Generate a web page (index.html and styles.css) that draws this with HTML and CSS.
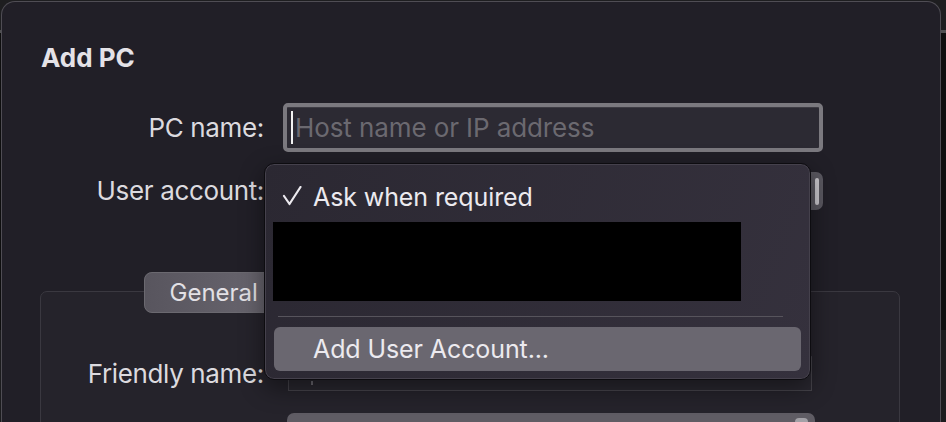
FILE: index.html
```html
<!DOCTYPE html>
<html lang="en">
<head>
    <meta charset="UTF-8">
    <meta name="viewport" content="width=device-width, initial-scale=1.0">
    <title>Add PC</title>
    <link rel="stylesheet" href="styles.css">
</head>
<body>
    <div class="sheet">
        <h1 class="title">Add PC</h1>

        <div class="form">
            <label class="label" for="pc_name">PC name:</label>
            <div class="field field-focus">
                <span class="caret"></span>
                <span class="placeholder">Host name or IP address</span>
            </div>

            <label class="label">User account:</label>
            <div class="select"><span class="knob"></span></div>
        </div>

        <div class="tabs">
            <div class="tab-bar">
                <div class="segments">
                    <span class="segment active">General</span>
                    <span class="segment"></span>
                </div>
            </div>
            <div class="tab-box">
                <div class="form form-inner">
                    <label class="label">Friendly name:</label>
                    <div class="field field-plain"><span class="tick"></span></div>

                    <span class="label"></span>
                    <div class="select select-low"><span class="knob"></span></div>
                </div>
            </div>
        </div>

        <!-- user account popup menu, open over the form -->
        <div class="menu">
            <div class="menu-item">
                <svg class="check" width="20" height="20" viewBox="0 0 20 20">
                    <path d="M2 10 L7.5 18 L18.5 1" fill="none" stroke="#eceaef" stroke-width="2.2" stroke-linecap="round" stroke-linejoin="round"/>
                </svg>
                <span>Ask when required</span>
            </div>
            <div class="redacted"></div>
            <div class="menu-sep"></div>
            <div class="menu-item highlighted">
                <span>Add User Account...</span>
            </div>
        </div>
    </div>
</body>
</html>
```

FILE: styles.css
```css
html, body {
    margin: 0;
    height: 100%;
    overflow: hidden;
}
body {
    font-family: Inter, "Noto Sans", sans-serif;
    color: #dcdadf;
    background: linear-gradient(to bottom, #1e1e20 0, #1e1e20 30px, #505052 30px, #505052 33px, #0e0e0e 33px, #0e0e0e 330px, #1c1c1e 330px);
}
.sheet {
    position: relative;
    margin: 1px 5px 0 1px;
    height: 421px;
    overflow: hidden;
    padding: 40px 40px 0 39px;
    box-sizing: border-box;
    background: #211f27;
    border: 1px solid #4f4d54;
    border-bottom: none;
    border-radius: 14px 14px 0 0;
}
.title {
    margin: 0;
    font-size: 26px;
    line-height: 32px;
    font-weight: 700;
    color: #e4e2e7;
}
.form {
    display: grid;
    grid-template-columns: 223px 540px;
    grid-template-rows: 49px 38px;
    column-gap: 19px;
    row-gap: 20px;
    margin-top: 29px;
    align-items: center;
}
.label {
    justify-self: end;
    font-size: 26px;
    line-height: 32px;
    color: #dcdadf;
    letter-spacing: -0.35px;
}
.field {
    position: relative;
    box-sizing: border-box;
    height: 100%;
    display: flex;
    align-items: center;
}
.field-focus {
    border: 4px solid #7b797f;
    border-radius: 5px;
    background: #2c2a33;
    box-shadow: inset 0 1px 0 #3e3c44;
    padding-left: 8px;
}
.caret {
    width: 2px;
    height: 33px;
    background: #f2f2f2;
    margin-left: -4px;
    margin-right: 2px;
}
.placeholder {
    font-size: 26px;
    color: #6b6970;
    letter-spacing: -0.1px;
}
.select {
    height: 100%;
    border-radius: 7px;
    background: #5a5860;
    position: relative;
}
.knob {
    position: absolute;
    right: 4px;
    top: 6px;
    width: 4px;
    bottom: 5px;
    border-radius: 3px;
    background: #c9c7cc;
}
.tabs {
    margin: 62px 0 0 -1px;
}
.tab-bar {
    position: relative;
    z-index: 1;
    display: flex;
    justify-content: center;
    margin-bottom: -22px;
}
.segments {
    display: flex;
    width: 653px;
    height: 41px;
    border-radius: 8px;
    background: #3e3c44;
}
.segment {
    flex: 1;
}
.segment.active {
    flex: 0 0 142px;
    box-sizing: border-box;
    border: 1px solid #6b6970;
    border-radius: 8px;
    background: linear-gradient(to right, #58555e, #6a6770);
    font-size: 24px;
    line-height: 39px;
    padding-left: 25px;
    color: #e2e0e5;
}
.tab-box {
    border: 1px solid #3a3840;
    border-radius: 7px;
    background: #25232b;
    height: 200px;
    padding: 64px 0 0 0;
    box-sizing: border-box;
}
.form-inner {
    grid-template-columns: 223px 524px;
    grid-template-rows: 35px 30px;
    column-gap: 24px;
    row-gap: 22px;
    margin-top: 0;
}
.field-plain {
    border: 1px solid #45434a;
    border-top-color: #3a3840;
    background: #29272f;
}
.tick {
    position: absolute;
    left: 22px;
    bottom: 5px;
    width: 2px;
    height: 4px;
    background: #6a6870;
}
.select-low {
    margin-left: -1px;
    width: 528px;
    border-radius: 7px 7px 0 0;
    background: #5f5c64;
}
.select-low .knob {
    right: 7px;
    top: 5px;
    width: 13px;
    border-radius: 4px;
    background: #a3a1a7;
}
.menu {
    position: absolute;
    z-index: 2;
    left: 262px;
    top: 161px;
    width: 547px;
    height: 217px;
    box-sizing: border-box;
    padding: 15px 9px 9px 9px;
    border: 1px solid #0d0c10;
    border-radius: 10px;
    background: linear-gradient(110deg, #2b2832, #35313d);
    box-shadow: inset 0 0 0 1px #45414c, 0 8px 24px rgba(0, 0, 0, 0.45);
}
.menu-item {
    display: flex;
    align-items: center;
    height: 36px;
    padding-left: 39px;
    position: relative;
    font-size: 25px;
    color: #eceaef;
    letter-spacing: -0.1px;
}
.check {
    position: absolute;
    left: 8px;
    top: 7px;
}
.redacted {
    margin: 7px 0 0 -1px;
    width: 468px;
    height: 79px;
    background: #000;
}
.menu-sep {
    height: 1px;
    margin: 15px 18px 0 4px;
    background: #57545c;
}
.menu-item.highlighted {
    margin-top: 10px;
    height: 44px;
    border-radius: 6px;
    background: #6a6770;
}
```
